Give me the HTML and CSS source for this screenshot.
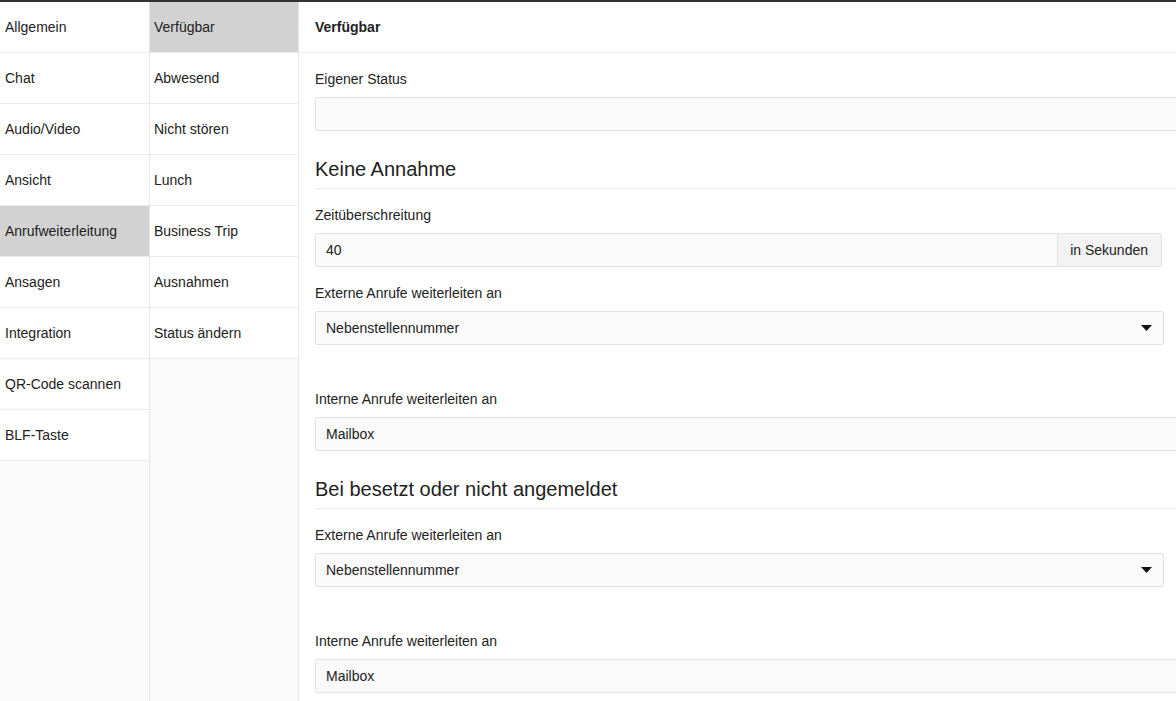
FILE: index.html
```html
<!DOCTYPE html>
<html lang="de">
<head>
    <meta charset="UTF-8">
    <meta name="viewport" content="width=device-width, initial-scale=1.0">
    <title>Anrufweiterleitung</title>
    <link rel="stylesheet" href="styles.css">
</head>
<body>
    <div class="app">
        <div class="nav">
            <div class="nav-item">Allgemein</div>
            <div class="nav-item">Chat</div>
            <div class="nav-item">Audio/Video</div>
            <div class="nav-item">Ansicht</div>
            <div class="nav-item active">Anrufweiterleitung</div>
            <div class="nav-item">Ansagen</div>
            <div class="nav-item">Integration</div>
            <div class="nav-item">QR-Code scannen</div>
            <div class="nav-item">BLF-Taste</div>
        </div>

        <div class="nav sub-nav">
            <div class="nav-item active">Verfügbar</div>
            <div class="nav-item">Abwesend</div>
            <div class="nav-item">Nicht stören</div>
            <div class="nav-item">Lunch</div>
            <div class="nav-item">Business Trip</div>
            <div class="nav-item">Ausnahmen</div>
            <div class="nav-item">Status ändern</div>
        </div>

        <div class="main">
            <div class="main-header">Verfügbar</div>

            <div class="form">
                <div class="field">
                    <label>Eigener Status</label>
                    <div class="input"></div>
                </div>

                <h2>Keine Annahme</h2>

                <div class="field">
                    <label>Zeitüberschreitung</label>
                    <div class="input-group">
                        <div class="input">40</div>
                        <div class="addon">in Sekunden</div>
                    </div>
                </div>

                <div class="field select-field">
                    <label>Externe Anrufe weiterleiten an</label>
                    <div class="select">
                        <span>Nebenstellennummer</span>
                        <svg width="11" height="6" viewBox="0 0 11 6"><path d="M0 0h11L5.5 6z" fill="#111"/></svg>
                    </div>
                </div>

                <div class="field">
                    <label>Interne Anrufe weiterleiten an</label>
                    <div class="input">Mailbox</div>
                </div>

                <h2>Bei besetzt oder nicht angemeldet</h2>

                <div class="field select-field">
                    <label>Externe Anrufe weiterleiten an</label>
                    <div class="select">
                        <span>Nebenstellennummer</span>
                        <svg width="11" height="6" viewBox="0 0 11 6"><path d="M0 0h11L5.5 6z" fill="#111"/></svg>
                    </div>
                </div>

                <div class="field">
                    <label>Interne Anrufe weiterleiten an</label>
                    <div class="input">Mailbox</div>
                </div>
            </div>
        </div>
    </div>
</body>
</html>
```

FILE: styles.css
```css
* {
    box-sizing: border-box;
}

body {
    margin: 0;
    font-family: "Liberation Sans", Arial, sans-serif;
    font-size: 14px;
    color: #222;
    background: #fff;
    overflow: hidden;
}

.app {
    display: flex;
    width: 1200px;
    height: 701px;
    border-top: 2px solid #333;
}

.nav {
    width: 150px;
    flex-shrink: 0;
    background: #fafafa;
    border-right: 1px solid #e6e6e6;
}

.sub-nav {
    width: 149px;
}

.nav-item {
    height: 51px;
    display: flex;
    align-items: center;
    padding-left: 5px;
    background: #fff;
    border-bottom: 1px solid #ececec;
}

.sub-nav .nav-item {
    padding-left: 4px;
}

.nav-item.active {
    background: #d2d2d2;
}

.main {
    flex: 1;
    min-width: 0;
}

.main-header {
    height: 51px;
    display: flex;
    align-items: center;
    padding-left: 16px;
    font-weight: bold;
    font-size: 14px;
    border-bottom: 1px solid #ececec;
}

.form {
    padding-left: 16px;
}

.field {
    margin-top: 18px;
}

.select-field {
    margin-bottom: 46px;
}

label {
    display: block;
    line-height: 16px;
    margin-bottom: 10px;
}

h2 {
    font-size: 20px;
    font-weight: normal;
    line-height: 22px;
    margin: 27px 0 0;
    padding-bottom: 8px;
    border-bottom: 1px solid #ececec;
}

.input {
    height: 34px;
    line-height: 32px;
    padding-left: 10px;
    background: #fafafa;
    border: 1px solid #e2e2e2;
    border-radius: 2px;
}

.input-group {
    display: flex;
    max-width: 847px;
}

.input-group .input {
    flex: 1;
    border-radius: 2px 0 0 2px;
}

.addon {
    height: 34px;
    line-height: 32px;
    padding: 0 13px 0 12px;
    background: #f3f3f3;
    border: 1px solid #e2e2e2;
    border-left: none;
    border-radius: 0 3px 3px 0;
}

.select {
    max-width: 849px;
    height: 34px;
    display: flex;
    align-items: center;
    justify-content: space-between;
    padding: 0 11px 0 10px;
    background: #fafafa;
    border: 1px solid #e2e2e2;
    border-radius: 2px;
}
```
